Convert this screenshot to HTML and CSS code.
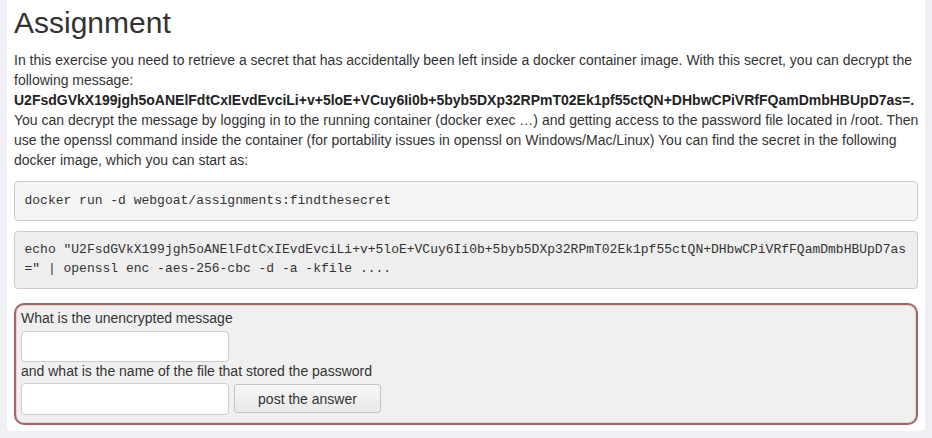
FILE: index.html
```html
<!DOCTYPE html>
<html>
<head>
<meta charset="utf-8">
<link rel="stylesheet" href="styles.css">
</head>
<body>
<div class="panel">
  <h2 class="title">Assignment</h2>
  <p class="intro">In this exercise you need to retrieve a secret that has accidentally been left inside a docker container image. With this secret, you can decrypt the following message: <b>U2FsdGVkX199jgh5oANElFdtCxIEvdEvciLi+v+5loE+VCuy6Ii0b+5byb5DXp32RPmT02Ek1pf55ctQN+DHbwCPiVRfFQamDmbHBUpD7as=.</b> You can decrypt the message by logging in to the running container (docker exec …) and getting access to the password file located in /root. Then use the openssl command inside the container (for portability issues in openssl on Windows/Mac/Linux) You can find the secret in the following docker image, which you can start as:</p>
  <pre class="code">docker run -d webgoat/assignments:findthesecret</pre>
  <pre class="code code-dark">echo "U2FsdGVkX199jgh5oANElFdtCxIEvdEvciLi+v+5loE+VCuy6Ii0b+5byb5DXp32RPmT02Ek1pf55ctQN+DHbwCPiVRfFQamDmbHBUpD7as=" | openssl enc -aes-256-cbc -d -a -kfile ....</pre>
  <form class="attack">
    <div class="label">What is the unencrypted message</div>
    <input class="field" type="text">
    <div class="label label-2">and what is the name of the file that stored the password</div>
    <div class="row">
      <input class="field" type="text">
      <button class="btn" type="button">post the answer</button>
    </div>
  </form>
</div>
</body>
</html>
```
FILE: styles.css
```css
html, body {
  margin: 0;
  padding: 0;
}
body {
  background: #eef0f5;
  font-family: "Liberation Sans", Arial, Helvetica, sans-serif;
  font-size: 14px;
  line-height: 20px;
  color: #333;
  padding: 0 7px;
}
.panel {
  background: #fff;
  padding: 6px 7px 6px 7px;
  border-radius: 0 0 4px 4px;
}
.title {
  margin: 0 0 11px 0;
  font-size: 30px;
  font-weight: 500;
  line-height: 33px;
  color: #333;
}
.intro {
  margin: 0 -6px 11px 0;
}
.intro b {
  color: #222;
}
.code {
  margin: 0 0 10px 0;
  padding: 9.5px;
  font-family: "Liberation Mono", "Courier New", monospace;
  font-size: 13px;
  line-height: 18.57px;
  color: #333;
  background: #f5f5f5;
  border: 1px solid #ccc;
  border-radius: 4px;
  white-space: pre-wrap;
  word-break: break-all;
}
.code-dark {
  background: #eeeeee;
  margin-bottom: 14px;
}
.attack {
  margin: 0;
  padding: 5px 5px 8px 5px;
  background: #f0f0f0;
  border: 2px solid #a66565;
  border-radius: 10px;
  box-shadow: inset 0 0 0 1px #d8d8d8;
  display: flex;
  flex-direction: column;
  align-items: flex-start;
}
.label {
  line-height: 16px;
  color: #333;
}
.label-2 {
  margin-top: 1px;
}
.field {
  box-sizing: border-box;
  width: 208px;
  height: 31px;
  margin: 5px 0 0 0;
  padding: 4px 8px;
  background: #fff;
  border: 1px solid #ccc;
  border-radius: 4px;
  font-family: inherit;
  font-size: 14px;
}
.row {
  display: flex;
  align-items: center;
  gap: 5px;
}
.row .field {
  height: 32px;
  margin-top: 4px;
}
.btn {
  box-sizing: border-box;
  width: 147px;
  height: 29px;
  margin-top: 4px;
  padding: 0;
  border: 1px solid #c5c5c5;
  border-radius: 3px;
  background: linear-gradient(#f7f7f7, #e9e9e9);
  font-family: "Liberation Sans", Arial, sans-serif;
  font-size: 14px;
  color: #333;
}
```
